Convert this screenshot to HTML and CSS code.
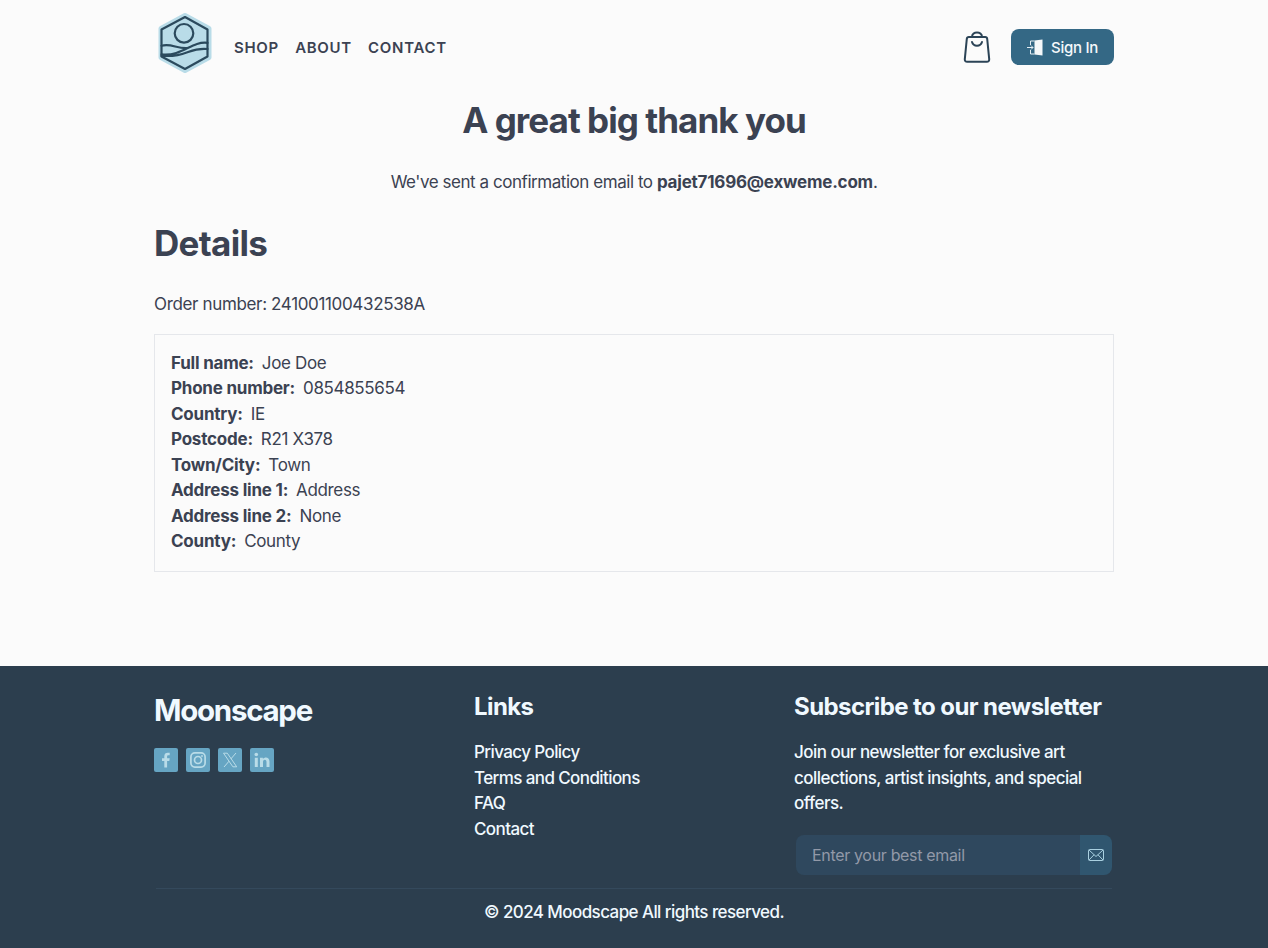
FILE: index.html
```html
<!DOCTYPE html>
<html lang="en">
<head>
<meta charset="utf-8">
<title>Moonscape</title>
<link rel="stylesheet" href="styles.css">
</head>
<body>
<header class="header container">
  <a class="logo" aria-label="Home">
    <svg width="56" height="62" viewBox="0 0 56 62" fill="none" stroke-linejoin="round" stroke-linecap="round">
      <path d="M28 3.500 52 16.500V45.500L28 58.500 4 45.500V16.500Z" fill="#b9dce8" stroke="#b9dce8" stroke-width="5"/>
      <g stroke="#2b4a5d" stroke-width="2.200">
        <path d="M28 5 50.500 17.500V44.500L28 57 4.500 44.500V17.500Z"/>
        <circle cx="27" cy="21.300" r="9.300"/>
        <path d="M4.500 33.800C14 31 20 37 31 36M4.500 42.300C26 44.500 34 29 50.500 30.800M4.500 43.800C30 45.500 32 35 50.500 37"/>
      </g>
    </svg>
  </a>
  <nav class="nav"><a>SHOP</a><a>ABOUT</a><a>CONTACT</a></nav>
  <div class="actions">
    <svg class="bag" width="28" height="34" viewBox="0 0 28 34" fill="none" stroke="#2b4356" stroke-width="2" stroke-linecap="round" stroke-linejoin="round">
      <path d="M5.800 7H22.200Q24 7 24.200 8.800L26.200 29.200Q26.300 31.800 23.800 31.800H4.200Q1.700 31.800 1.800 29.200L3.800 8.800Q4 7 5.800 7ZM9 7C9 1 19 1 19 7M9 12C10.500 17 17.500 17 19 12"/>
    </svg>
    <button class="signin">
      <svg width="16" height="17" viewBox="0 0 16 17" fill="none" stroke="#e4eef4" stroke-width="1">
        <path d="M7.500 1.500 15.500 .5V16.500L7.500 15.500Z" fill="#f4f7f9" stroke="none"/>
        <path d="M7.500 2H3.500V6M3.500 11V15H7.500M0 8.500H6M4 6.500 6 8.500 4 10.500"/>
      </svg>
      <span>Sign In</span>
    </button>
  </div>
</header>
<main class="main container">
  <h1 class="title title-center">A great big thank you</h1>
  <p class="lead">We've sent a confirmation email to <strong>pajet71696@exweme.com</strong>.</p>
  <h2 class="title">Details</h2>
  <p class="order">Order number: 241001100432538A</p>
  <dl class="details">
    <div class="row"><dt>Full name:</dt><dd>Joe Doe</dd></div>
    <div class="row"><dt>Phone number:</dt><dd>0854855654</dd></div>
    <div class="row"><dt>Country:</dt><dd>IE</dd></div>
    <div class="row"><dt>Postcode:</dt><dd>R21 X378</dd></div>
    <div class="row"><dt>Town/City:</dt><dd>Town</dd></div>
    <div class="row"><dt>Address line 1:</dt><dd>Address</dd></div>
    <div class="row"><dt>Address line 2:</dt><dd>None</dd></div>
    <div class="row"><dt>County:</dt><dd>County</dd></div>
  </dl>
</main>
<footer class="footer">
  <div class="container">
    <div class="columns">
      <section>
        <h2 class="brand">Moonscape</h2>
        <div class="social">
          <a class="social-link" aria-label="Facebook"><svg width="24" height="24" viewBox="0 0 24 24"><path d="M10.300 19.500V13H8V10.200H10.300V8.300C10.300 5.800 11.700 4.700 13.800 4.700L15.700 4.800V7.300H14.400C13.300 7.300 13.100 7.900 13.100 8.700V10.200H15.700L15.300 13H13.100V19.500Z" fill="#b9dce8"/></svg></a>
          <a class="social-link" aria-label="Instagram"><svg width="24" height="24" viewBox="0 0 24 24" fill="none" stroke="#b9dce8" stroke-width="1.700"><rect x="4.900" y="4.900" width="14.200" height="14.200" rx="4"/><circle cx="12" cy="12" r="3.500"/><circle cx="16" cy="8" r=".9" fill="#b9dce8" stroke="none"/></svg></a>
          <a class="social-link" aria-label="X"><svg width="24" height="24" viewBox="0 0 24 24" fill="none" stroke="#b9dce8" stroke-width="1"><path d="M5.500 5.200H9.300L18.700 18.800H14.900ZM18 5 12.800 11M11 13.200 6 19"/></svg></a>
          <a class="social-link" aria-label="LinkedIn"><svg width="24" height="24" viewBox="0 0 24 24" fill="#b9dce8"><circle cx="6.300" cy="6.500" r="1.800"/><path d="M4.800 9.700H7.800V19H4.800ZM10 9.700H12.900V11C14.800 8.500 19.500 9 19.500 13.400V19H16.500V14C16.500 11 13 11.200 13 14V19H10Z"/></svg></a>
        </div>
      </section>
      <section>
        <h3 class="heading">Links</h3>
        <ul class="links"><li>Privacy Policy</li><li>Terms and Conditions</li><li>FAQ</li><li>Contact</li></ul>
      </section>
      <section>
        <h3 class="heading">Subscribe to our newsletter</h3>
        <p class="blurb">Join our newsletter for exclusive art collections, artist insights, and special offers.</p>
        <form class="subscribe">
          <input class="email" type="email" placeholder="Enter your best email">
          <button class="send" type="button" aria-label="Subscribe"><svg width="16" height="12" viewBox="0 0 16 12" fill="none" stroke="#a9d0e0" stroke-width="1" stroke-linejoin="round"><rect x=".5" y=".5" width="15" height="11" rx="1"/><path d="M1 1 8 7.500 15 1M1 11 6 5.800M15 11 10 5.800"/></svg></button>
        </form>
      </section>
    </div>
    <p class="copyright">© 2024 Moodscape All rights reserved.</p>
  </div>
</footer>
</body>
</html>
```
FILE: styles.css
```css
* { box-sizing: border-box; margin: 0; padding: 0; }
body { min-height: 948px; display: flex; flex-direction: column; background: #fbfbfb; color: #3b4252; font: 17px/25.5px Inter, "Liberation Sans", sans-serif; letter-spacing: -.35px; }
.container { width: 960px; margin: 0 auto; }
.header { display: flex; align-items: center; height: 94px; }
.logo { display: flex; margin: -9px 0 0 3px; }
.nav { display: flex; gap: 16.200px; padding-top: 2px; margin-left: 21px; font-size: 15px; font-weight: 600; letter-spacing: .7px; }
.actions { display: flex; align-items: center; gap: 20px; margin-left: auto; }
.bag { display: block; }
.signin { display: flex; align-items: center; justify-content: center; gap: 8px; width: 103px; height: 36px; border: 0; border-radius: 8px; background: #346885; color: #f4f8fb; font: 500 15px Inter, sans-serif; letter-spacing: -.3px; }
.main { height: 572px; }
.title { height: 53px; font-size: 35px; line-height: 53px; font-weight: 700; letter-spacing: -.7px; }
.title-center, .lead { text-align: center; }
.title-center { letter-spacing: -.950px; }
.lead { margin: 23px 0 21px; letter-spacing: -.45px; }
.order { margin: 22px 0 17px; }
.details { height: 238px; padding: 15.500px 16px; border: 1px solid #e5e7eb; }
.row { display: flex; gap: 8px; }
dt, strong { font-weight: 700; letter-spacing: -.22px; }
.footer { flex: 1; padding-top: 22px; background: #2c3e4e; color: #f0f9ff; font-weight: 500; letter-spacing: -.6px; }
.columns { display: grid; grid-template-columns: repeat(3, 320px); height: 201px; margin: 0 2px; border-bottom: 1px solid #34495c; }
.columns > section { margin-left: -2px; margin-right: 2px; }
.brand { font-size: 29.500px; line-height: 44px; letter-spacing: -1.280px; }
.social { display: flex; gap: 8px; margin-top: 16px; }
.social-link { display: block; width: 24px; height: 24px; border-radius: 2px; background: #66a5c3; }
.social-link svg { display: block; }
.heading { padding-top: 1px; font-size: 24px; line-height: 36px; margin-bottom: 15px; letter-spacing: -.58px; white-space: nowrap; }
.links { list-style: none; }
.blurb { width: 320px; letter-spacing: -.53px; }
.subscribe { display: flex; width: 316px; height: 40px; margin: 18.500px 0 0 2px; border-radius: 8px; overflow: hidden; }
.email { flex: 1; min-width: 0; padding: 0 16px; border: 0; background: #2f485e; font: 16px Inter, sans-serif; letter-spacing: -.33px; }
.email::placeholder { color: #9299a8; }
.send { display: flex; align-items: center; justify-content: center; width: 32px; border: 0; background: #30566f; }
.copyright { margin-top: 11px; text-align: center; letter-spacing: -.58px; }
```
